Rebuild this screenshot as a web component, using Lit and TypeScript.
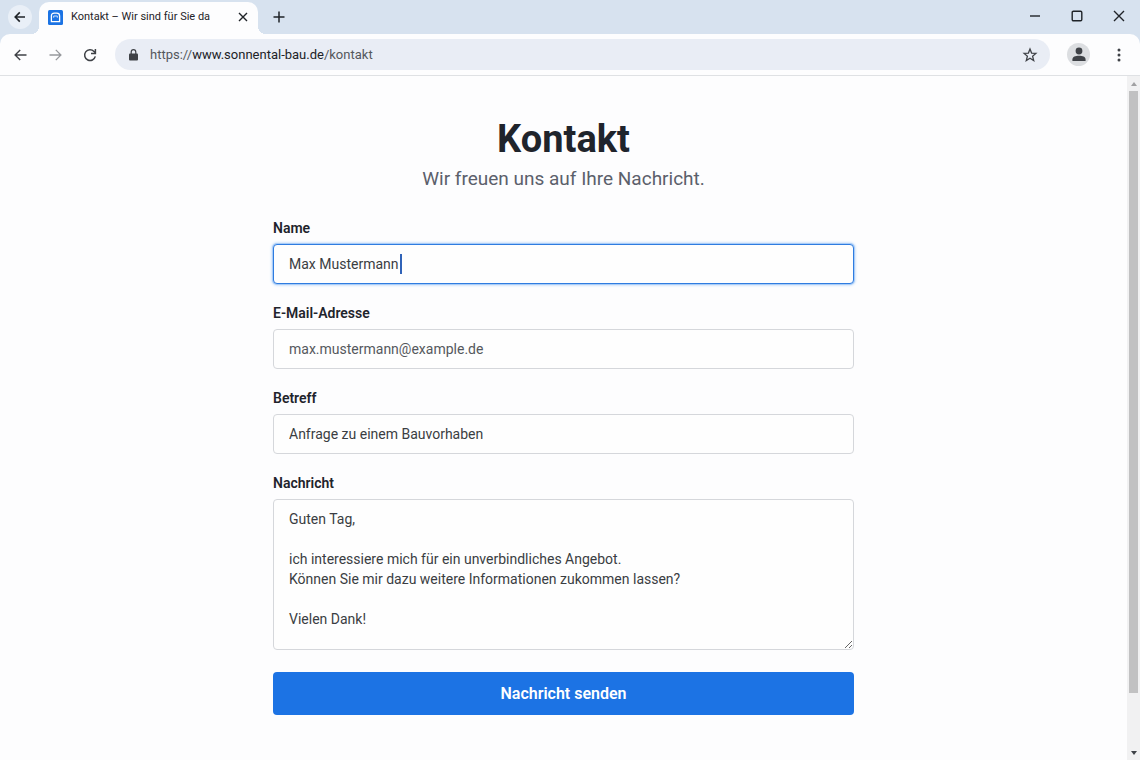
import { LitElement, html, css } from "lit";
import { customElement, state, query } from "lit/decorators.js";

@customElement("browser-tabs")
class BrowserTabs extends LitElement {
  static styles = css`
    :host {
      display: block;
      background: #d7e2ef;
    }
    .strip {
      display: flex;
      align-items: stretch;
      height: 34px;
    }
    button {
      display: grid;
      place-items: center;
      border: 0;
      padding: 0;
      background: none;
      color: #1f2328;
    }
    svg {
      display: block;
      fill: none;
      stroke: currentColor;
    }
    .solid {
      stroke: none;
    }
    .search {
      width: 24px;
      height: 24px;
      margin: 5px 7px 5px 8px;
      border-radius: 50%;
      background: #e9eff7;
    }
    .tab {
      position: relative;
      display: flex;
      align-items: center;
      width: 219px;
      margin-top: 2px;
      padding: 0 6px 2px 9px;
      box-sizing: border-box;
      border-radius: 10px 10px 0 0;
      background: #fdfdfe;
    }
    .tab::before,
    .tab::after {
      content: "";
      position: absolute;
      bottom: 0;
      width: 8px;
      height: 8px;
    }
    .tab::before {
      right: 100%;
      background: radial-gradient(circle at 0 0, transparent 8px, #fdfdfe 8px);
    }
    .tab::after {
      left: 100%;
      background: radial-gradient(circle at 100% 0, transparent 8px, #fdfdfe 8px);
    }
    .title {
      flex: 1;
      margin-left: 8px;
      font-size: 11px;
      line-height: 16px;
      white-space: nowrap;
      color: #1f2328;
    }
    .close {
      width: 18px;
      height: 18px;
    }
    .new {
      width: 24px;
      height: 24px;
      margin: 5px 0 5px 9px;
    }
    .window {
      display: flex;
      margin-left: auto;
      padding-bottom: 3px;
    }
    .window button {
      width: 42px;
    }
  `;

  render() {
    return html`
      <div class="strip">
        <button class="search" aria-label="Zurück">
          <svg width="12" height="12" viewBox="0 0 12 12" stroke-width="1.6">
            <path d="M11 6H1.6M5.8 1.4 1.2 6l4.6 4.6" />
          </svg>
        </button>
        <div class="tab">
          <svg class="solid" width="15" height="15" viewBox="0 0 15 15">
            <rect width="15" height="15" rx="1.5" fill="#1b73e4" />
            <path d="M3.4 11.6V6Q3.4 3.2 6.2 3.2H8.8Q11.6 3.2 11.6 6V11.6Z" stroke="#fff" stroke-width="1.3" />
            <path d="M5.7 7.7V6h3.6v1.7" stroke="#cfe3fb" stroke-width="1" />
          </svg>
          <span class="title">Kontakt – Wir sind für Sie da</span>
          <button class="close" aria-label="Tab schließen">
            <svg width="10" height="10" viewBox="0 0 10 10" stroke-width="1.4">
              <path d="m1 1 8 8M9 1 1 9" />
            </svg>
          </button>
        </div>
        <button class="new" aria-label="Neuer Tab">
          <svg width="12" height="12" viewBox="0 0 12 12" stroke-width="1.5">
            <path d="M6 .5v11M.5 6h11" />
          </svg>
        </button>
        <div class="window">
          <button aria-label="Minimieren">
            <svg width="12" height="12" viewBox="0 0 12 12" stroke-width="1.4"><path d="M1 6h10" /></svg>
          </button>
          <button aria-label="Maximieren">
            <svg width="12" height="12" viewBox="0 0 12 12" stroke-width="1.4">
              <rect x="1.2" y="1.2" width="9.6" height="9.6" rx="1.2" />
            </svg>
          </button>
          <button aria-label="Schließen">
            <svg width="12" height="12" viewBox="0 0 12 12" stroke-width="1.4">
              <path d="m1 1 10 10M11 1 1 11" />
            </svg>
          </button>
        </div>
      </div>
    `;
  }
}

@customElement("browser-toolbar")
class BrowserToolbar extends LitElement {
  static styles = css`
    :host {
      display: block;
      background: #d7e2ef;
    }
    .bar {
      display: flex;
      align-items: center;
      height: 41px;
      padding: 0 9px;
      border-radius: 10px 10px 0 0;
      border-bottom: 1px solid #dfe1e4;
      background: #fdfdfe;
    }
    button {
      display: grid;
      place-items: center;
      border: 0;
      padding: 0;
      background: none;
      color: #3f4247;
    }
    svg {
      display: block;
      fill: none;
      stroke: currentColor;
    }
    .solid {
      fill: #3f4247;
      stroke: none;
    }
    .nav {
      display: flex;
      gap: 13px;
    }
    .nav button {
      width: 22px;
      height: 24px;
    }
    .nav .off {
      color: #97999d;
    }
    .address {
      display: flex;
      align-items: center;
      flex: 1;
      height: 31px;
      margin-left: 14px;
      padding: 0 12px 0 14px;
      box-sizing: border-box;
      border-radius: 16px;
      background: #e9edf5;
    }
    .url {
      flex: 1;
      margin-left: 12px;
      font-size: 13px;
      line-height: 18px;
      color: #54575c;
      text-decoration: none;
    }
    .host {
      color: #202226;
    }
    .avatar {
      width: 23px;
      height: 23px;
      margin-left: 17px;
      border-radius: 50%;
      background: #dcdee1;
    }
    .menu {
      width: 24px;
      height: 24px;
      margin-left: 17px;
    }
  `;

  render() {
    return html`
      <div class="bar">
        <div class="nav">
          <button aria-label="Zurück">
            <svg width="13" height="12" viewBox="0 0 13 12" stroke-width="1.4">
              <path d="M12.5 6H1.2M6.2.9 1.1 6l5.1 5.1" />
            </svg>
          </button>
          <button class="off" aria-label="Vorwärts">
            <svg width="13" height="12" viewBox="0 0 13 12" stroke-width="1.3">
              <path d="M.5 6h11.3M6.8.9 11.9 6l-5.1 5.1" />
            </svg>
          </button>
          <button aria-label="Neu laden">
            <svg width="14" height="14" viewBox="0 0 14 14" stroke-width="1.5">
              <path d="M12.3 8.4A5.4 5.4 0 1 1 11 3.4L12.3 4.7" />
              <path d="M12.4 1V5.5H8" />
            </svg>
          </button>
        </div>
        <div class="address">
          <svg class="solid" width="9" height="12" viewBox="0 0 9 12">
            <rect x="0" y="4.4" width="9" height="7.2" rx="1" />
            <path d="M2.2 5V3a2.3 2.3 0 0 1 4.6 0V5" fill="none" stroke="#3f4247" stroke-width="1.2" />
          </svg>
          <a class="url" href="#kontakt"
            >https://<span class="host">www.sonnental-bau.de</span>/kontakt</a
          >
          <button aria-label="Lesezeichen">
            <svg width="16" height="16" viewBox="0 0 16 16" stroke-width="1.3">
              <path
                d="m8 2.1 1.6 4 4.3.3-3.3 2.8 1.1 4.3L8 11.2l-3.7 2.3 1.1-4.3L2.1 6.4l4.3-.3Z"
              />
            </svg>
          </button>
        </div>
        <button class="avatar" aria-label="Profil">
          <svg class="solid" width="14" height="15" viewBox="0 0 14 15">
            <circle cx="7" cy="4" r="3.4" />
            <path d="M.4 14v-1.4C.4 9.8 3.4 8.8 7 8.8s6.6 1 6.6 3.8V14Z" />
          </svg>
        </button>
        <button class="menu" aria-label="Menü">
          <svg class="solid" width="4" height="14" viewBox="0 0 4 14">
            <circle cx="2" cy="2" r="1.5" />
            <circle cx="2" cy="7" r="1.5" />
            <circle cx="2" cy="12" r="1.5" />
          </svg>
        </button>
      </div>
    `;
  }
}

@customElement("contact-form")
class ContactForm extends LitElement {
  static styles = css`
    :host {
      display: block;
      flex: 1;
      min-width: 0;
      overflow: hidden;
    }
    .page {
      max-width: 581px;
      margin: 0 auto;
      padding: 39px 16px;
      color: #1f242c;
    }
    h1 {
      margin: 0;
      font-size: 38px;
      line-height: 48px;
      font-weight: 700;
      text-align: center;
    }
    .lead {
      margin: 4px 0 27px;
      font-size: 19px;
      line-height: 24px;
      color: #5b606b;
      text-align: center;
    }
    form {
      display: flex;
      flex-direction: column;
      gap: 19px;
    }
    .field {
      display: flex;
      flex-direction: column;
      gap: 6px;
    }
    label {
      font-size: 14px;
      line-height: 20px;
      font-weight: 600;
    }
    .box {
      position: relative;
      display: flex;
    }
    input,
    textarea {
      flex: 1;
      min-width: 0;
      box-sizing: border-box;
      margin: 0;
      border: 1px solid #d5d7db;
      border-radius: 4px;
      padding: 9px 15px;
      background: #fefefe;
      color: #3a3d42;
      font-family: inherit;
      font-size: 14px;
      line-height: 20px;
      outline: none;
    }
    input {
      height: 40px;
    }
    .active {
      border-color: #2f7ce0;
      box-shadow: 0 0 0 1px #a9cdf8, 0 0 3px 1px #a9cdf8;
      caret-color: transparent;
    }
    .muted {
      color: #55585d;
    }
    .caret {
      position: absolute;
      top: 10px;
      width: 2px;
      height: 20px;
      background: #3063b8;
    }
    textarea {
      height: 151px;
      resize: vertical;
    }
    .send {
      height: 43px;
      margin-top: 3px;
      border: 0;
      border-radius: 4px;
      background: #1c73e4;
      color: #fff;
      font-family: inherit;
      font-size: 16px;
      line-height: 20px;
      font-weight: 600;
    }
  `;

  @state() private name = "Max Mustermann";
  @state() private caretX = 0;
  @query("#name") private nameInput!: HTMLInputElement;

  firstUpdated() {
    this.placeCaret();
    document.fonts.ready.then(() => this.placeCaret());
  }

  private placeCaret() {
    const style = getComputedStyle(this.nameInput);
    const ctx = document.createElement("canvas").getContext("2d")!;
    ctx.font = `${style.fontSize} ${style.fontFamily}`;
    this.caretX = Math.round(ctx.measureText(this.name).width) + 17;
  }

  private onName(e: Event) {
    this.name = (e.target as HTMLInputElement).value;
    this.placeCaret();
  }

  render() {
    const message = [
      "Guten Tag,",
      "",
      "ich interessiere mich für ein unverbindliches Angebot.",
      "Können Sie mir dazu weitere Informationen zukommen lassen?",
      "",
      "Vielen Dank!",
    ].join("\n");
    return html`
      <main class="page">
        <h1>Kontakt</h1>
        <p class="lead">Wir freuen uns auf Ihre Nachricht.</p>
        <form @submit=${(e: Event) => e.preventDefault()}>
          <div class="field">
            <label for="name">Name</label>
            <div class="box">
              <input id="name" class="active" type="text" .value=${this.name} @input=${this.onName} />
              <span class="caret" style="left:${this.caretX}px"></span>
            </div>
          </div>
          <div class="field">
            <label for="mail">E-Mail-Adresse</label>
            <div class="box">
              <input id="mail" class="muted" type="email" .value=${"max.mustermann@example.de"} />
            </div>
          </div>
          <div class="field">
            <label for="subject">Betreff</label>
            <div class="box">
              <input id="subject" type="text" .value=${"Anfrage zu einem Bauvorhaben"} />
            </div>
          </div>
          <div class="field">
            <label for="message">Nachricht</label>
            <div class="box">
              <textarea id="message" .value=${message}></textarea>
            </div>
          </div>
          <button class="send" type="submit">Nachricht senden</button>
        </form>
      </main>
    `;
  }
}

@customElement("app-root")
class AppRoot extends LitElement {
  static styles = css`
    :host {
      display: flex;
      flex-direction: column;
      height: 100vh;
      background: #fdfdfe;
      font-family: Roboto, "Noto Sans", sans-serif;
    }
    .view {
      display: flex;
      flex: 1;
      min-height: 0;
    }
    .scroll {
      display: flex;
      flex-direction: column;
      width: 13px;
      background: #f1f1f2;
    }
    .arrow {
      display: grid;
      place-items: center;
      height: 15px;
    }
    .arrow svg {
      display: block;
    }
    .track {
      flex: 1;
      padding: 0 2px;
    }
    .thumb {
      background: #c1c1c2;
    }
  `;

  @state() private visible = 92;

  render() {
    return html`
      <browser-tabs></browser-tabs>
      <browser-toolbar></browser-toolbar>
      <div class="view">
        <contact-form></contact-form>
        <div class="scroll">
          <div class="arrow">
            <svg width="6" height="4" viewBox="0 0 6 4"><path d="M0 4 3 0l3 4Z" fill="#a0a0a2" /></svg>
          </div>
          <div class="track">
            <div class="thumb" style="height:${this.visible}%"></div>
          </div>
          <div class="arrow">
            <svg width="6" height="4" viewBox="0 0 6 4"><path d="M0 0h6L3 4Z" fill="#3f4247" /></svg>
          </div>
        </div>
      </div>
    `;
  }
}
